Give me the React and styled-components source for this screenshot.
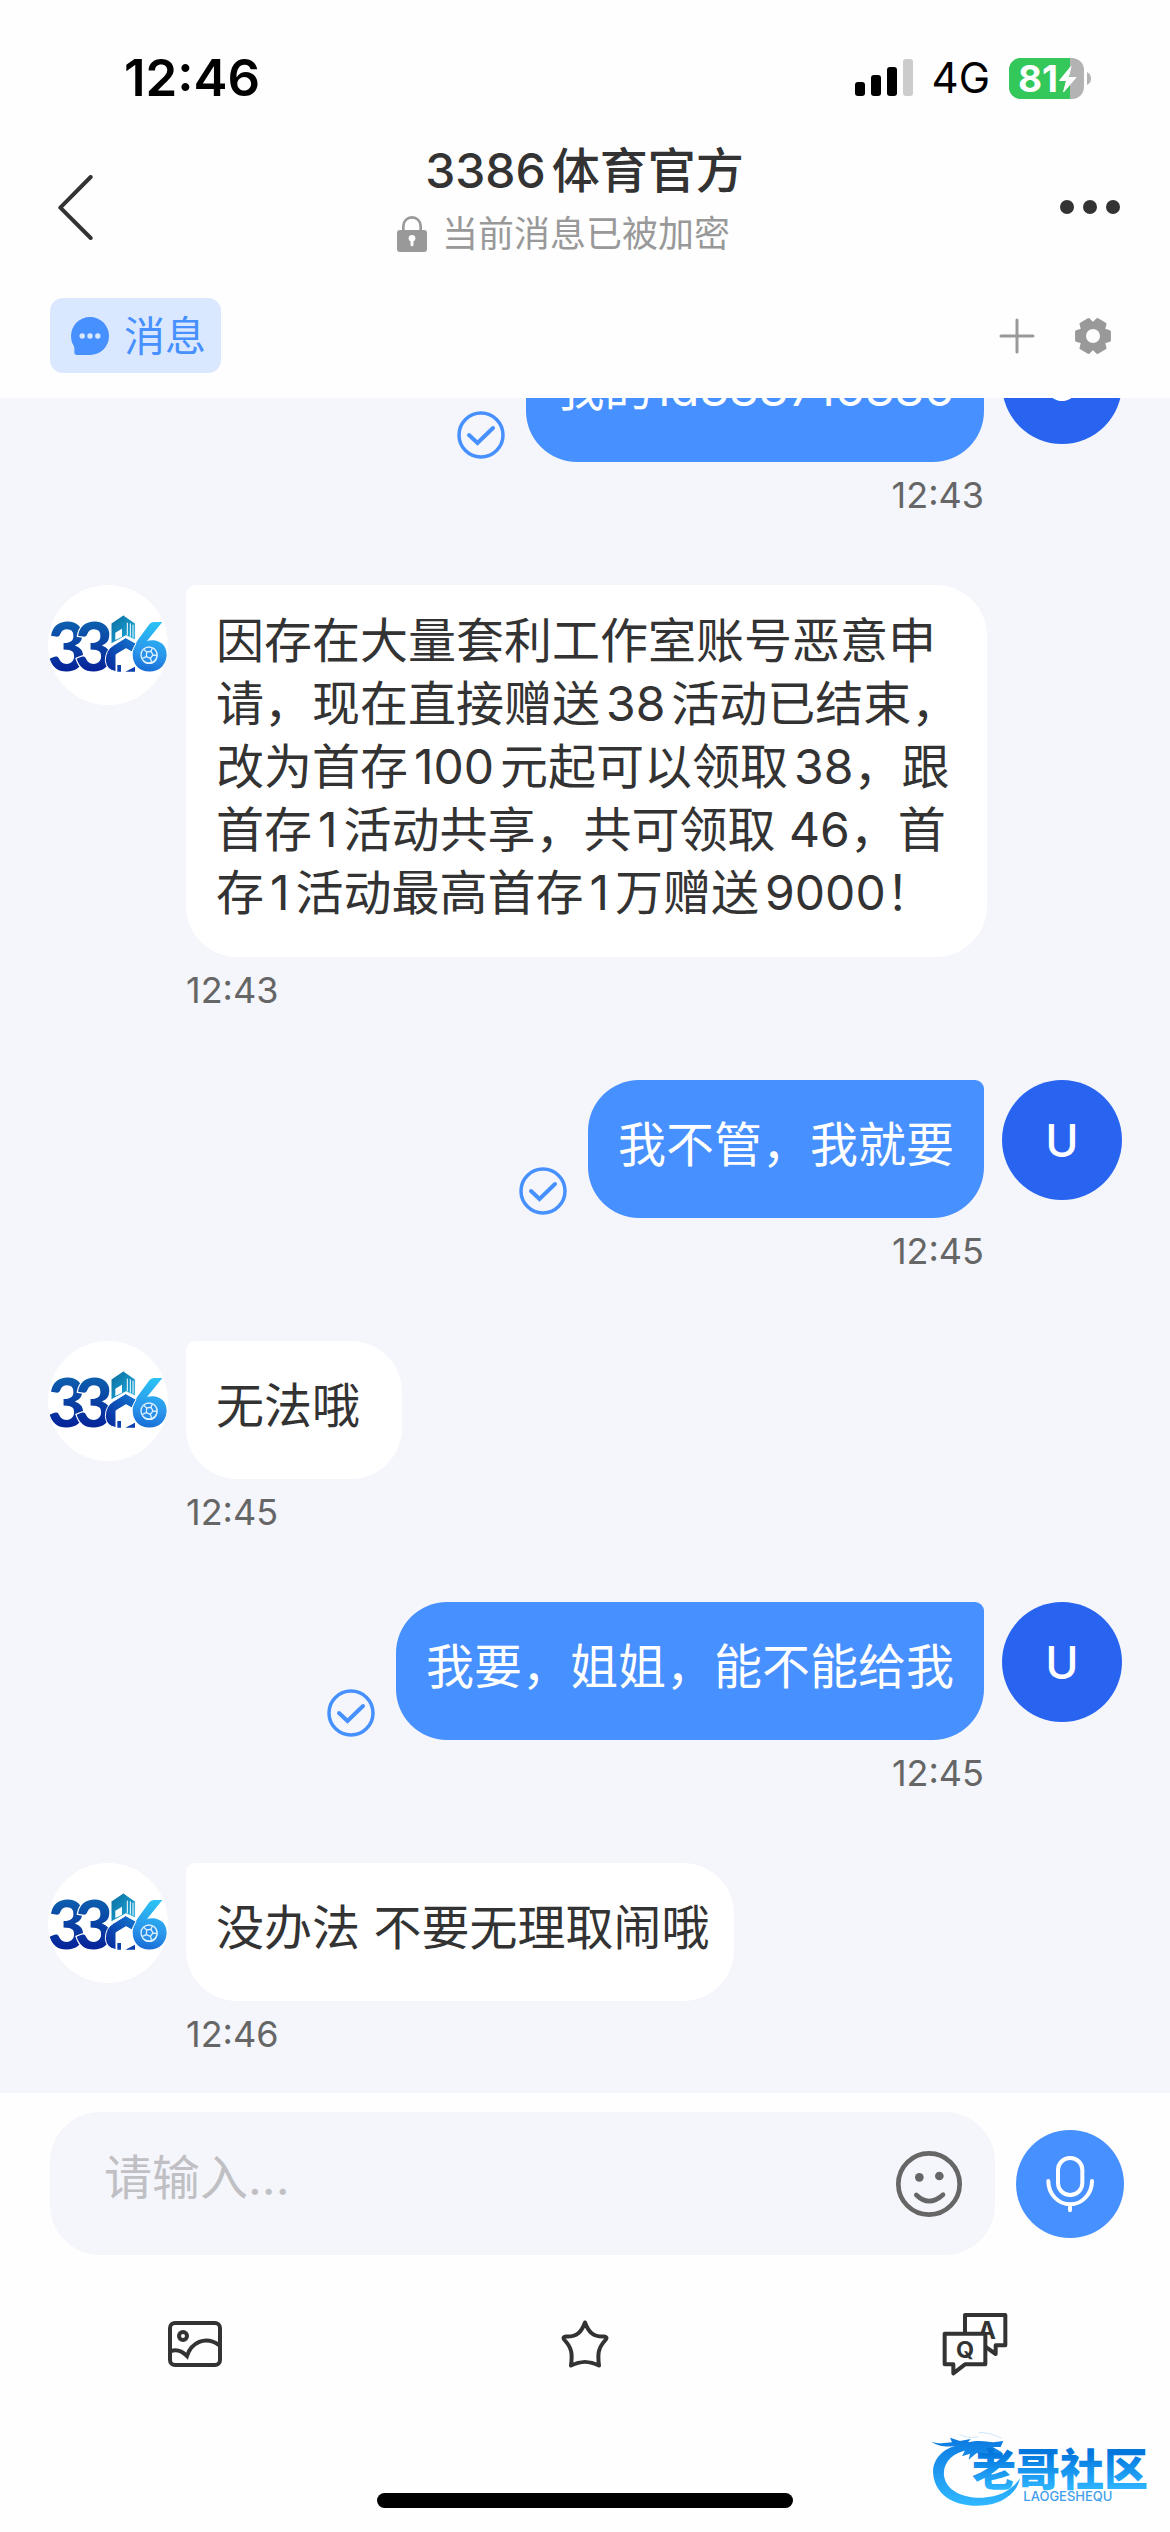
import React from 'react';
import styled, { createGlobalStyle, css } from 'styled-components';

const GlobalStyle = createGlobalStyle`
  *, *::before, *::after { box-sizing: border-box; }
  body {
    margin: 0;
    background: #fefefe;
    color: #333;
    font-family: Inter, "Noto Sans CJK SC", sans-serif;
    text-autospace: normal;
  }
  button, input { font: inherit; color: inherit; }
  svg { display: block; flex: none; }
`;

const Screen = styled.div`
  position: relative;
  display: flex;
  flex-direction: column;
  height: 100vh;
  overflow: hidden;
`;

const StatusBar = styled.div`
  display: flex;
  align-items: center;
  justify-content: space-between;
  height: 141px;
  padding: 15px 79px 0 124px;
  color: #000;
`;

const Clock = styled.time`
  font-size: 51px;
  line-height: 60px;
  font-weight: 600;
`;

const StatusIcons = styled.div`
  display: flex;
  align-items: center;
  gap: 19px;
`;

const Network = styled.span`
  font-size: 42px;
  line-height: 48px;
  font-weight: 400;
`;

const IconButton = styled.button`
  display: flex;
  align-items: center;
  justify-content: center;
  padding: 0;
  border: 0;
  background: none;
  cursor: pointer;
`;

const NavBar = styled.header`
  display: grid;
  grid-template-columns: 1fr auto 1fr;
  align-items: center;
  padding: 0 50px 0 58px;
  height: 132px;

  & > :last-child { justify-self: end; }
  & > :first-child { justify-self: start; }
`;

const TitleBlock = styled.div`
  display: flex;
  flex-direction: column;
  align-items: center;
  gap: 9px;
  padding-bottom: 15px;
`;

const Title = styled.h1`
  margin: 0;
  padding-right: 9px;
  font-size: 48px;
  line-height: 60px;
  font-weight: 500;
`;

const Encrypted = styled.p`
  display: flex;
  align-items: center;
  gap: 15px;
  margin: 0;
  padding-right: 51px;
  font-size: 36px;
  line-height: 48px;
  color: #999;
`;

const TabBar = styled.nav`
  display: flex;
  align-items: center;
  justify-content: space-between;
  padding: 25px 58px 25px 50px;
`;

const Tab = styled.button`
  display: flex;
  align-items: center;
  gap: 15px;
  height: 75px;
  padding: 0 15px 0 21px;
  border: 0;
  border-radius: 13px;
  background: #dae8ff;
  color: #4790ff;
  font-size: 41px;
  line-height: 48px;
  cursor: pointer;
`;

const TabActions = styled.div`
  display: flex;
  align-items: center;
  gap: 39px;
`;

const Feed = styled.main`
  flex: 1;
  min-height: 0;
  display: flex;
  flex-direction: column-reverse;
  overflow-y: auto;
  scrollbar-width: none;
  background: #f4f6fb;
`;

const MessageList = styled.ol`
  display: flex;
  flex-direction: column;
  gap: 69px;
  margin: 0;
  padding: 48px 48px 38px;
  list-style: none;
`;

const MessageRow = styled.li`
  display: flex;
  flex-direction: ${(p) => (p.$mine ? 'row-reverse' : 'row')};
  align-items: flex-start;
  gap: 18px;
`;

const Avatar = styled.div`
  flex: none;
  display: flex;
  align-items: center;
  justify-content: center;
  width: 120px;
  height: 120px;
  border-radius: 50%;
  overflow: hidden;
  background: ${(p) => (p.$mine ? '#2864f0' : '#fff')};
  color: #fff;
  font-size: 45px;
  font-weight: 500;
`;

const MessageBody = styled.div`
  display: flex;
  flex-direction: column;
  align-items: ${(p) => (p.$mine ? 'flex-end' : 'flex-start')};
  max-width: 801px;
`;

const BubbleLine = styled.div`
  display: flex;
  align-items: flex-end;
  gap: 21px;
`;

const Bubble = styled.p`
  display: flex;
  align-items: center;
  min-width: 216px;
  min-height: 138px;
  margin: 0;
  font-size: 48px;
  line-height: 63px;
  ${(p) =>
    p.$mine
      ? css`
          padding: 24px 30px 33px;
          background: #4790ff;
          color: #fff;
          border-radius: 51px 9px 51px 51px;
        `
      : css`
          padding: 24px 24px 33px 30px;
          background: #fff;
          border-radius: 9px 51px 51px 51px;
        `}
`;

const Receipt = styled.span`
  padding-bottom: 3px;
`;

const SentAt = styled.time`
  margin-top: 12px;
  font-size: 36px;
  line-height: 42px;
  color: #666;
`;

const Composer = styled.form`
  display: flex;
  align-items: center;
  gap: 21px;
  padding: 19px 46px 0 50px;
`;

const Field = styled.label`
  flex: 1;
  display: flex;
  align-items: center;
  height: 143px;
  padding: 0 33px 0 54px;
  border-radius: 50px;
  background: #f4f6fb;
`;

const TextInput = styled.input`
  flex: 1;
  min-width: 0;
  padding: 0 0 12px;
  border: 0;
  outline: 0;
  background: none;
  font-size: 48px;
  line-height: 63px;
  text-autospace: no-autospace;

  &::placeholder { color: #c0c0c4; opacity: 1; }
`;

const MicButton = styled(IconButton)`
  flex: none;
  width: 108px;
  height: 108px;
  border-radius: 50%;
  background: #4790ff;
`;

const Tools = styled.div`
  display: grid;
  grid-template-columns: repeat(3, 1fr);
  height: 178px;
`;

const HomeArea = styled.div`
  display: flex;
  justify-content: center;
  padding: 60px 0 24px;
`;

const HomeIndicator = styled.div`
  width: 416px;
  height: 15px;
  border-radius: 8px;
  background: #000;
`;

const Watermark = styled.div`
  position: absolute;
  right: 14px;
  bottom: 22px;
  pointer-events: none;
`;

const SignalIcon = () => (
  <svg width="58" height="38" viewBox="0 0 58 38" aria-hidden="true">
    <rect x="0" y="23" width="10" height="14" rx="3" />
    <rect x="16" y="16" width="10" height="21" rx="3" />
    <rect x="32" y="8" width="10" height="29" rx="3" />
    <rect x="48" y="0" width="10" height="37" rx="3" fill="#ccc" />
  </svg>
);

const BatteryIcon = () => (
  <svg width="82" height="41" viewBox="0 0 82 41" overflow="visible" role="img" aria-label="81%">
    <clipPath id="battery-shell">
      <rect width="75" height="41" rx="12" />
    </clipPath>
    <g clipPath="url(#battery-shell)">
      <rect width="75" height="41" fill="#b3b3b3" />
      <rect width="61" height="41" fill="#34c759" />
    </g>
    <path d="M78 14Q82 16 82 20.500Q82 25 78 27Z" fill="#b3b3b3" />
    <text x="9" y="34" fontSize="37" fontWeight="700" fill="#fff">81</text>
    <path d="M62 8.500L50.500 22.500H57.500L54.500 34L67 19.500H59.500Z" fill="#fff" stroke="#fff" strokeWidth="1" strokeLinejoin="round" />
  </svg>
);

const BackIcon = () => (
  <svg width="35" height="65" viewBox="83 133 105 195" fill="none" stroke="#333" strokeWidth="12" strokeLinecap="round" strokeLinejoin="round" aria-hidden="true">
    <path d="M181 139L90 231L181 322" />
  </svg>
);

const MoreIcon = () => (
  <svg width="60" height="14" viewBox="0 0 60 14" fill="#333" aria-hidden="true">
    <circle cx="7" cy="7" r="7" />
    <circle cx="30" cy="7" r="7" />
    <circle cx="53" cy="7" r="7" />
  </svg>
);

const LockIcon = () => (
  <svg width="30" height="36" viewBox="0 0 90 108" aria-hidden="true">
    <rect y="42" width="90" height="66" rx="9" fill="#999" />
    <path d="M19 44V30a26 26 0 0 1 52 0V44" fill="none" stroke="#999" strokeWidth="8" />
    <circle cx="45" cy="67" r="10" fill="#fff" />
    <path d="M45 68V86" stroke="#fff" strokeWidth="9" strokeLinecap="round" />
  </svg>
);

const ChatIcon = () => (
  <svg width="38" height="38" viewBox="124 560 112 112" aria-hidden="true">
    <circle cx="180" cy="616" r="56" fill="#4790ff" />
    <path d="M126 632Q134 642 134 652V664Q134 672 142 672H180V620Z" fill="#4790ff" />
    <g fill="#dae8ff">
      <circle cx="157" cy="616" r="8" />
      <circle cx="180" cy="616" r="8" />
      <circle cx="203" cy="616" r="8" />
    </g>
  </svg>
);

const PlusIcon = () => (
  <svg width="36" height="36" viewBox="0 0 36 36" stroke="#999" strokeWidth="3" strokeLinecap="round" aria-hidden="true">
    <path d="M18 2V34M2 18H34" />
  </svg>
);

const gearOutline = Array.from({ length: 6 }, (_, tooth) =>
  [[-26, 13], [-15, 17], [15, 17], [26, 13]].map(([offset, radius]) => {
    const angle = ((tooth * 60 + offset) * Math.PI) / 180;
    return `${19 + radius * Math.cos(angle)},${19 + radius * Math.sin(angle)}`;
  })
).flat().join('L');

const GearIcon = () => (
  <svg width="38" height="38" viewBox="0 0 38 38" aria-hidden="true">
    <path d={`M${gearOutline}Z`} fill="#999" stroke="#999" strokeWidth="3" strokeLinejoin="round" />
    <circle cx="19" cy="19" r="7" fill="#fefefe" />
  </svg>
);

const CheckIcon = () => (
  <svg width="48" height="48" viewBox="0 0 48 48" fill="none" stroke="#4790ff" strokeLinecap="round" aria-label="已发送" role="img">
    <circle cx="24" cy="24" r="22" strokeWidth="3.500" />
    <path d="M12 24L20.500 32L36 17" strokeWidth="4" />
  </svg>
);

const SmileIcon = () => (
  <svg width="66" height="66" viewBox="168 150 198 198" fill="none" stroke="#666" aria-hidden="true">
    <circle cx="267" cy="249" r="92" strokeWidth="14" />
    <circle cx="238" cy="229" r="13" fill="#666" stroke="none" />
    <circle cx="298" cy="225" r="13" fill="#666" stroke="none" />
    <path d="M229 282Q267 319 309 281" strokeWidth="14" strokeLinecap="round" />
  </svg>
);

const MicIcon = () => (
  <svg width="48" height="58" viewBox="618 174 144 174" fill="none" stroke="#fff" strokeWidth="12" strokeLinecap="round" aria-hidden="true">
    <rect x="654" y="183" width="73" height="111" rx="36" />
    <path d="M625 252A65.500 70 0 0 0 756 252M690 324V340" />
  </svg>
);

const PictureIcon = () => (
  <svg width="54" height="46" viewBox="0 0 54 46" fill="none" stroke="#333" strokeWidth="4" aria-hidden="true">
    <rect x="2" y="2" width="50" height="42" rx="5" />
    <circle cx="15" cy="15" r="4" />
    <path d="M3 30C9 28 15 31 19 35C23 22 37 14 51 24" />
  </svg>
);

const StarIcon = () => (
  <svg width="48" height="48" viewBox="0 0 48 48" fill="none" stroke="#333" strokeWidth="4" strokeLinejoin="round" aria-hidden="true">
    <path d="M24 2.500C27.500 12 32 17 43 16.500Q47 17 44.500 20C37 28 36.500 34 38 45.500C28 40.500 20 40.500 10 45.500C11.500 34 11 28 3.500 20Q1 17 5 16.500C16 17 20.500 12 24 2.500Z" />
  </svg>
);

const QuestionIcon = () => (
  <svg width="66" height="64" viewBox="126 93 198 192" fill="none" stroke="#333" strokeWidth="12" strokeLinejoin="round" aria-hidden="true">
    <path d="M195 160V102H316V193H287V219L256 197" />
    <text x="261" y="175" fontSize="72" fontWeight="700" textAnchor="middle" fill="#333" stroke="none">A</text>
    <path d="M134 158H256V250H195L160 277V250H134Z" fill="#fefefe" />
    <text x="195" y="230" fontSize="70" fontWeight="700" textAnchor="middle" fill="#333" stroke="none">Q</text>
  </svg>
);

const BrandLogo = () => (
  <svg width="120" height="120" viewBox="54 45 360 360" role="img" aria-label="3386">
    <defs>
      <linearGradient id="brand-deep" x1="0" y1="0" x2="0" y2="1">
        <stop offset="0.2" stopColor="#0d5fae" />
        <stop offset="0.8" stopColor="#06259a" />
      </linearGradient>
      <linearGradient id="brand-tower" x1="0" y1="0" x2="1" y2="1">
        <stop offset="0" stopColor="#0b6c9c" />
        <stop offset="1" stopColor="#1fb0e4" />
      </linearGradient>
      <linearGradient id="brand-house" x1="0" y1="1" x2="1" y2="0">
        <stop offset="0" stopColor="#06259a" />
        <stop offset="1" stopColor="#1479d2" />
      </linearGradient>
      <linearGradient id="brand-bright" x1="0.5" y1="0" x2="0.4" y2="1">
        <stop offset="0.1" stopColor="#2bcdf5" />
        <stop offset="0.6" stopColor="#2a95ec" />
        <stop offset="1" stopColor="#0b4fc4" />
      </linearGradient>
    </defs>
    <g fontFamily="Lato, sans-serif" fontSize="198" fontWeight="900" stroke="#fff" strokeWidth="7" paintOrder="stroke">
      <text x="53" y="303" fill="url(#brand-deep)">3</text>
      <text x="134" y="303" fill="url(#brand-deep)">3</text>
      <text x="301" y="303" fill="url(#brand-bright)">6</text>
    </g>
    <path d="M243 222V160L280 135L316 160V210L288 197Z" fill="url(#brand-tower)" stroke="#fff" strokeWidth="3" />
    <path d="M256 210V188L276 176V200Z" fill="#fff" />
    <path d="M292 158V196M301 160V200M309 164V203" stroke="#fff" strokeWidth="3" />
    <path d="M226 272Q226 240 250 226L287 203L318 220Q308 238 306 246L288 236L258 254V305Q228 300 226 272Z" fill="url(#brand-house)" stroke="#fff" strokeWidth="3" />
    <path d="M260 254L288 236L306 248Q304 275 314 290L286 305H260Z" fill="#fff" />
    <path d="M262 285H273V305H262ZM286 305L315 290V305Z" fill="#0a3fae" />
    <g fill="#2a8fe8" stroke="#d8f0ff" strokeWidth="4">
      <circle cx="357" cy="255" r="24" />
      <path d="M350 246L363 244L369 255L361 265L349 260ZM350 246L341 238M363 244L367 234M369 255L381 256M361 265L365 277M349 260L337 265" />
    </g>
  </svg>
);

const CommunityLogo = () => (
  <svg width="226" height="83" viewBox="92 440 678 249" role="img" aria-label="老哥社区">
    <defs>
      <linearGradient id="community" gradientUnits="userSpaceOnUse" x1="0" y1="470" x2="0" y2="670">
        <stop offset="0" stopColor="#0a78e0" />
        <stop offset="1" stopColor="#2fb6ff" />
      </linearGradient>
      <linearGradient id="community-text" gradientUnits="userSpaceOnUse" x1="0" y1="520" x2="0" y2="625">
        <stop offset="0" stopColor="#0477dd" />
        <stop offset="1" stopColor="#2db4ff" />
      </linearGradient>
    </defs>
    <g fill="url(#community)">
      <path d="M180 494C120 505 92 550 104 596C120 660 190 684 262 674C320 665 354 632 362 594C338 630 300 650 250 652C190 654 140 630 134 586C130 545 160 518 206 508Z" />
      <path d="M97 484C120 492 138 488 158 486L152 472L182 482L214 476L206 486C240 478 262 484 282 486L312 482L304 500L280 500L308 516L300 526L262 516L268 530L232 518L208 538L212 520L188 528L198 508L164 504L176 496C148 500 118 500 97 484Z" />
    </g>
    <path d="M180 462Q200 474 236 470M238 456Q280 458 306 474" fill="none" stroke="#cfe6fa" strokeWidth="3" />
    <text x="218" y="616" fontSize="132" fontWeight="900" fill="url(#community-text)">老哥社区</text>
    <text x="372" y="662" fontSize="39" fontWeight="500" fill="#3f9eec">LAOGESHEQU</text>
  </svg>
);

const messages = [
  { mine: true, text: '我的id383716386', time: '12:43' },
  {
    text: '因存在大量套利工作室账号恶意申请，现在直接赠送38活动已结束，改为首存100元起可以领取38，跟首存1活动共享，共可领取 46，首存1活动最高首存1万赠送9000！',
    time: '12:43',
  },
  { mine: true, text: '我不管，我就要', time: '12:45' },
  { text: '无法哦', time: '12:45' },
  { mine: true, text: '我要，姐姐，能不能给我', time: '12:45' },
  { text: '没办法 不要无理取闹哦', time: '12:46' },
];

function Message({ mine = false, text, time }) {
  return (
    <MessageRow $mine={mine}>
      <Avatar $mine={mine}>{mine ? 'U' : <BrandLogo />}</Avatar>
      <MessageBody $mine={mine}>
        <BubbleLine>
          {mine && <Receipt><CheckIcon /></Receipt>}
          <Bubble $mine={mine}>{text}</Bubble>
        </BubbleLine>
        <SentAt>{time}</SentAt>
      </MessageBody>
    </MessageRow>
  );
}

export default function App() {
  return (
    <Screen lang="zh-CN">
      <GlobalStyle />
      <StatusBar>
        <Clock>12:46</Clock>
        <StatusIcons>
          <SignalIcon />
          <Network>4G</Network>
          <BatteryIcon />
        </StatusIcons>
      </StatusBar>
      <NavBar>
        <IconButton aria-label="返回"><BackIcon /></IconButton>
        <TitleBlock>
          <Title>3386体育官方</Title>
          <Encrypted><LockIcon />当前消息已被加密</Encrypted>
        </TitleBlock>
        <IconButton aria-label="更多"><MoreIcon /></IconButton>
      </NavBar>
      <TabBar>
        <Tab><ChatIcon />消息</Tab>
        <TabActions>
          <IconButton aria-label="添加"><PlusIcon /></IconButton>
          <IconButton aria-label="设置"><GearIcon /></IconButton>
        </TabActions>
      </TabBar>
      <Feed>
        <MessageList>
          {messages.map((message, index) => (
            <Message key={index} {...message} />
          ))}
        </MessageList>
      </Feed>
      <Composer onSubmit={(event) => event.preventDefault()}>
        <Field>
          <TextInput type="text" placeholder="请输入..." aria-label="请输入" />
          <IconButton type="button" aria-label="表情"><SmileIcon /></IconButton>
        </Field>
        <MicButton type="button" aria-label="语音"><MicIcon /></MicButton>
      </Composer>
      <Tools>
        <IconButton aria-label="图片"><PictureIcon /></IconButton>
        <IconButton aria-label="收藏"><StarIcon /></IconButton>
        <IconButton aria-label="常见问题"><QuestionIcon /></IconButton>
      </Tools>
      <HomeArea><HomeIndicator /></HomeArea>
      <Watermark><CommunityLogo /></Watermark>
    </Screen>
  );
}
